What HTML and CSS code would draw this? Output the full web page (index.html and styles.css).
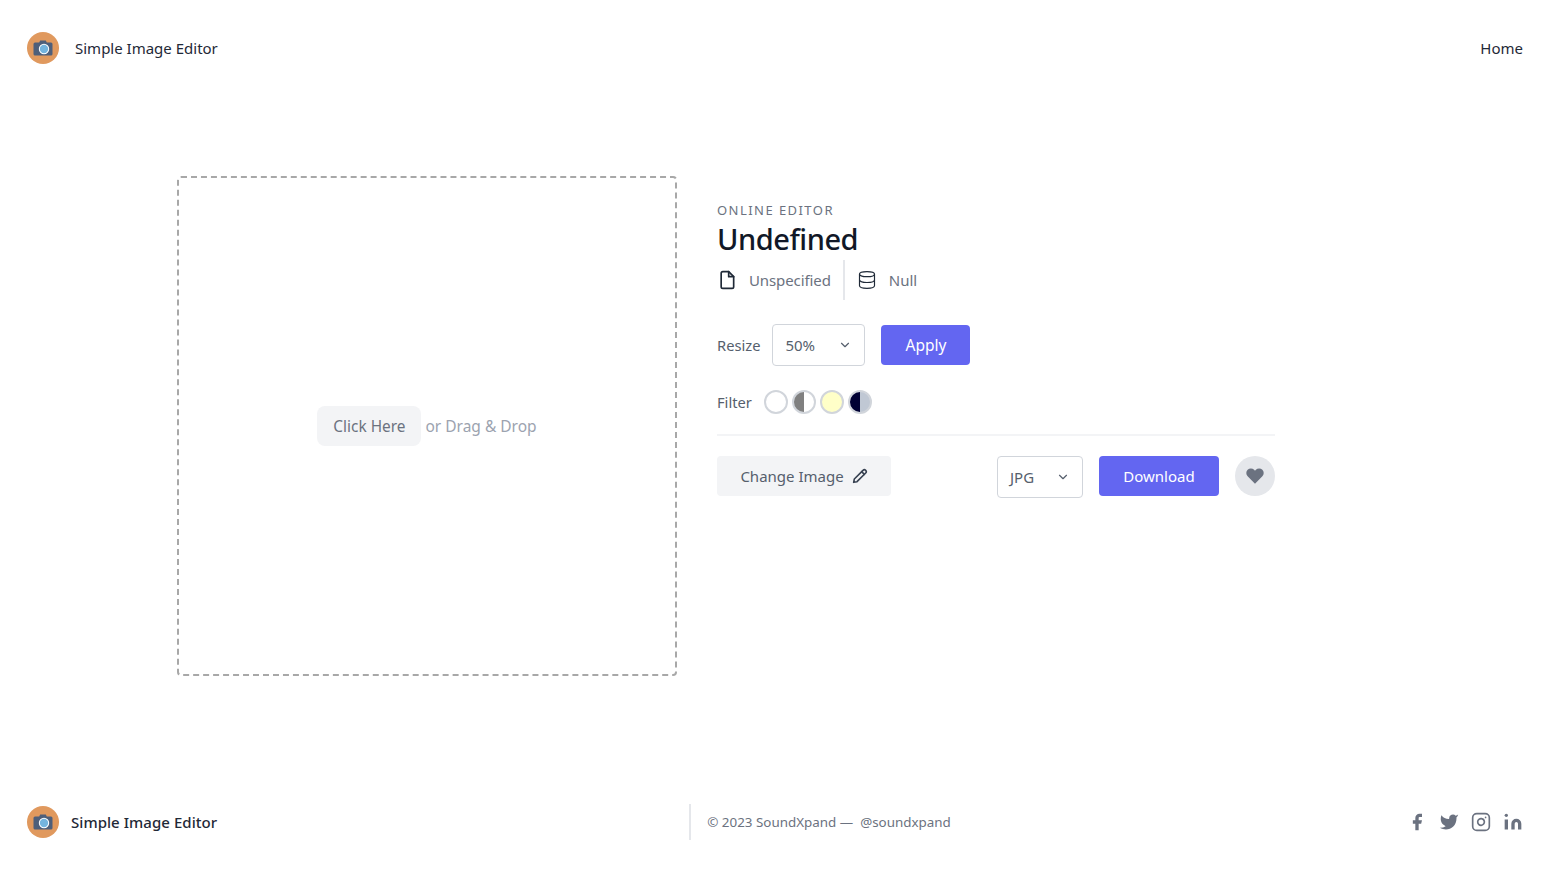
FILE: index.html
```html
<!DOCTYPE html>
<html lang="en">
<head>
    <meta charset="UTF-8">
    <meta name="viewport" content="width=device-width, initial-scale=1.0">
    <title>Simple Image Editor</title>
    <link rel="stylesheet" href="styles.css">
</head>
<body>
    <header class="site-header">
        <a class="brand" href="#">
            <svg class="logo" viewBox="0 0 32 32">
                <circle cx="16" cy="16" r="16" fill="#e0995e"/>
                <path d="M8 10.5h4.2l1-2h5.6l1 2H24a1.5 1.5 0 0 1 1.500 1.500v10a1.500 1.500 0 0 1-1.500 1.500H8a1.500 1.500 0 0 1-1.500-1.500V12A1.500 1.500 0 0 1 8 10.500z" fill="#4e5f7a"/>
                <circle cx="17" cy="17" r="5.200" fill="#fff"/>
                <circle cx="17" cy="17" r="4.200" fill="#74b4de"/>
            </svg>
            <span class="brand-name">Simple Image Editor</span>
        </a>
        <nav class="nav"><a href="#">Home</a></nav>
    </header>

    <main class="editor">
        <div class="dropzone">
            <button class="click-here">Click Here</button>
            <span class="drop-hint">or Drag &amp; Drop</span>
        </div>

        <div class="panel">
            <h2 class="eyebrow">ONLINE EDITOR</h2>
            <h1 class="title">Undefined</h1>

            <div class="meta">
                <span class="meta-item meta-first">
                    <svg class="meta-icon" viewBox="0 0 24 24" fill="none" stroke="#1f2937" stroke-width="2" stroke-linecap="round" stroke-linejoin="round"><path d="M14 2H7a2 2 0 0 0-2 2v16a2 2 0 0 0 2 2h11a2 2 0 0 0 2-2V8z"/><path d="M14 2v6h6"/></svg>
                    Unspecified
                </span>
                <span class="meta-item meta-second">
                    <svg class="meta-icon" viewBox="0 0 24 24" fill="none" stroke="#1f2937" stroke-width="1.400" stroke-linecap="round" stroke-linejoin="round"><ellipse cx="12" cy="5" rx="9" ry="3"/><path d="M21 12c0 1.660-4 3-9 3s-9-1.340-9-3"/><path d="M3 5v14c0 1.660 4 3 9 3s9-1.340 9-3V5"/></svg>
                    Null
                </span>
            </div>

            <div class="resize-row">
                <span class="label">Resize</span>
                <div class="select select-resize">
                    <span>50%</span>
                    <svg class="chevron" viewBox="0 0 24 24" fill="none" stroke="currentColor" stroke-width="2" stroke-linecap="round" stroke-linejoin="round"><path d="M6 9l6 6 6-6"/></svg>
                </div>
                <button class="btn btn-primary btn-apply">Apply</button>
            </div>

            <div class="filter-row">
                <span class="label">Filter</span>
                <button class="swatch swatch-none"></button>
                <button class="swatch swatch-gray"></button>
                <button class="swatch swatch-sepia"></button>
                <button class="swatch swatch-invert"></button>
            </div>

            <div class="actions">
                <button class="btn btn-change">
                    Change Image
                    <svg class="pencil" viewBox="0 0 24 24" fill="none" stroke="#374151" stroke-width="2.400" stroke-linecap="round" stroke-linejoin="round"><path d="M16.500 3.500a2.800 2.800 0 0 1 4 4L7.500 20.500 2.500 21.500l1-5z"/><path d="M14.500 5.500l4 4"/></svg>
                </button>
                <div class="select select-format">
                    <span>JPG</span>
                    <svg class="chevron" viewBox="0 0 24 24" fill="none" stroke="currentColor" stroke-width="2" stroke-linecap="round" stroke-linejoin="round"><path d="M6 9l6 6 6-6"/></svg>
                </div>
                <button class="btn btn-primary btn-download">Download</button>
                <button class="like">
                    <svg viewBox="0 0 24 24" fill="#6b7280"><path d="M20.840 4.610a5.500 5.500 0 0 0-7.780 0L12 5.670l-1.060-1.060a5.500 5.500 0 0 0-7.780 7.780L12 21.230l8.840-8.840a5.500 5.500 0 0 0 0-7.780z"/></svg>
                </button>
            </div>
        </div>
    </main>

    <footer class="site-footer">
        <a class="brand brand-footer" href="#">
            <svg class="logo" viewBox="0 0 32 32">
                <circle cx="16" cy="16" r="16" fill="#e0995e"/>
                <path d="M8 10.5h4.2l1-2h5.6l1 2H24a1.5 1.5 0 0 1 1.500 1.500v10a1.500 1.500 0 0 1-1.500 1.500H8a1.500 1.500 0 0 1-1.500-1.500V12A1.500 1.500 0 0 1 8 10.500z" fill="#4e5f7a"/>
                <circle cx="17" cy="17" r="5.200" fill="#fff"/>
                <circle cx="17" cy="17" r="4.200" fill="#74b4de"/>
            </svg>
            <span class="brand-name">Simple Image Editor</span>
        </a>
        <p class="copyright">© 2023 SoundXpand —<a href="#">@soundxpand</a></p>
        <div class="social">
            <svg viewBox="0 0 24 24" fill="#6b7280"><path d="M18 2h-3a5 5 0 0 0-5 5v3H7v4h3v8h4v-8h3l1-4h-4V7a1 1 0 0 1 1-1h3z"/></svg>
            <svg viewBox="0 0 24 24" fill="#6b7280"><path d="M23 3a10.900 10.900 0 0 1-3 1.530 4.480 4.480 0 0 0-7.860 3v1A10.660 10.660 0 0 1 3 4s-4 9 5 13a11.640 11.640 0 0 1-7 2c9 5 20 0 20-11.500a4.500 4.500 0 0 0-.080-.830A7.720 7.720 0 0 0 23 3z"/></svg>
            <svg viewBox="0 0 24 24" fill="none" stroke="#6b7280" stroke-width="2" stroke-linecap="round" stroke-linejoin="round"><rect x="2" y="2" width="20" height="20" rx="5" ry="5"/><path d="M16 11.370A4 4 0 1 1 12.630 8 4 4 0 0 1 16 11.370z"/><path d="M17.500 6.500h.010"/></svg>
            <svg viewBox="0 0 24 24" fill="#6b7280"><path d="M16 8a6 6 0 0 1 6 6v7h-4v-7a2 2 0 0 0-4 0v7h-4v-7a6 6 0 0 1 6-6z"/><path d="M2 9h4v12H2z"/><circle cx="4" cy="4" r="2"/></svg>
        </div>
    </footer>
</body>
</html>
```

FILE: styles.css
```css
* {
    box-sizing: border-box;
    font-family: "Noto Sans", "Open Sans", sans-serif;
}

body {
    margin: 0;
    background: #fff;
    color: #6b7280;
    font-size: 16px;
}

a {
    color: inherit;
    text-decoration: none;
}

button {
    border: 0;
    cursor: pointer;
    font-size: 16px;
}

.site-header {
    display: flex;
    align-items: center;
    justify-content: space-between;
    height: 96px;
    padding: 0 33px 0 27px;
}

.brand {
    display: flex;
    align-items: center;
}

.logo {
    width: 32px;
    height: 32px;
    flex: none;
}

.brand-name {
    margin-left: 16px;
    font-size: 15px;
    color: #1f2937;
}

.nav {
    font-size: 15px;
    color: #1f2937;
}

.editor {
    display: flex;
    align-items: flex-start;
    padding: 80px 0 0 177px;
}

.dropzone {
    display: flex;
    align-items: center;
    justify-content: center;
    width: 500px;
    height: 500px;
    border: 2px dashed #a8a8a8;
    border-radius: 4px;
}

.click-here {
    height: 40px;
    padding: 0 16px;
    border-radius: 8px;
    background: #f3f4f6;
    color: #6b7280;
    font-size: 15.400px;
}

.drop-hint {
    margin-left: 4px;
    color: #9ca3af;
    font-size: 15.500px;
}

.panel {
    width: 558px;
    margin-left: 40px;
    padding-top: 24px;
}

.eyebrow {
    margin: 0;
    font-size: 13px;
    font-weight: 400;
    line-height: 20px;
    letter-spacing: 1.450px;
    color: #6b7280;
}

.title {
    margin: 1px 0 0;
    font-size: 29px;
    font-weight: 500;
    line-height: 36px;
    letter-spacing: -0.450px;
    color: #111827;
}

.meta {
    display: flex;
    align-items: center;
    height: 40px;
    margin-top: 3px;
    font-size: 15px;
}

.meta-item {
    display: flex;
    align-items: center;
    height: 40px;
}

.meta-first {
    padding-right: 12px;
    border-right: 2px solid #e5e7eb;
    letter-spacing: -0.100px;
}

.meta-second {
    padding-left: 12px;
}

.meta-icon {
    width: 20px;
    height: 20px;
    margin-right: 12px;
}

.resize-row {
    display: flex;
    align-items: center;
    margin-top: 24px;
    font-size: 15px;
}

.label {
    color: #565f6d;
    font-size: 14.700px;
}

.select {
    display: flex;
    align-items: center;
    justify-content: space-between;
    height: 42px;
    padding: 0 12px;
    border: 1px solid #d1d5db;
    border-radius: 4px;
    background: #fff;
    color: #565f6d;
    font-size: 15px;
}

.select-resize {
    width: 93px;
    margin-left: 12px;
}

.select-format {
    width: 86px;
    margin-left: auto;
}

.chevron {
    width: 14px;
    height: 14px;
}

.btn {
    height: 40px;
    border-radius: 4px;
}

.btn-primary {
    background: #6366f1;
    color: #fff;
}

.btn-apply {
    width: 89px;
    margin-left: 16px;
    font-size: 15.500px;
}

.filter-row {
    display: flex;
    align-items: flex-start;
    height: 70px;
    padding-top: 24px;
    border-bottom: 2px solid #f3f4f6;
}

.swatch {
    width: 24px;
    height: 24px;
    padding: 0;
    margin-left: 4px;
    border: 2px solid #d1d5db;
    border-radius: 50%;
}

.filter-row .label {
    margin-right: 8px;
    line-height: 24px;
}

.swatch-none {
    background: #fff;
}

.swatch-gray {
    background: linear-gradient(90deg, #808080 50%, #fff 50%);
}

.swatch-sepia {
    background: #ffffc8;
}

.swatch-invert {
    background: linear-gradient(90deg, #000033 50%, #c0c8d4 50%);
}

.actions {
    display: flex;
    align-items: flex-start;
    margin-top: 20px;
}

.btn-change {
    display: flex;
    align-items: center;
    justify-content: center;
    width: 174px;
    background: #f3f4f6;
    color: #565f6d;
    font-size: 15px;
}

.pencil {
    width: 16px;
    height: 16px;
    margin-left: 8px;
}

.btn-download {
    width: 120px;
    margin-left: 16px;
    font-size: 15px;
}

.like {
    display: flex;
    align-items: center;
    justify-content: center;
    width: 40px;
    height: 40px;
    margin-left: 16px;
    padding: 0;
    border-radius: 50%;
    background: #e5e7eb;
}

.like svg {
    width: 20px;
    height: 20px;
}

.site-footer {
    display: flex;
    align-items: center;
    height: 96px;
    margin-top: 98px;
    padding: 0 33px 0 27px;
}

.brand-footer .brand-name {
    margin-left: 12px;
    font-weight: 500;
    letter-spacing: 0.050px;
}

.copyright {
    display: flex;
    align-items: center;
    height: 36px;
    margin: 0 0 0 472px;
    padding-left: 16px;
    border-left: 2px solid #e5e7eb;
    font-size: 13.400px;
    color: #6b7280;
}

.copyright a {
    margin-left: 7px;
}

.social {
    display: flex;
    gap: 12px;
    margin-left: auto;
}

.social svg {
    width: 20px;
    height: 20px;
}
```
